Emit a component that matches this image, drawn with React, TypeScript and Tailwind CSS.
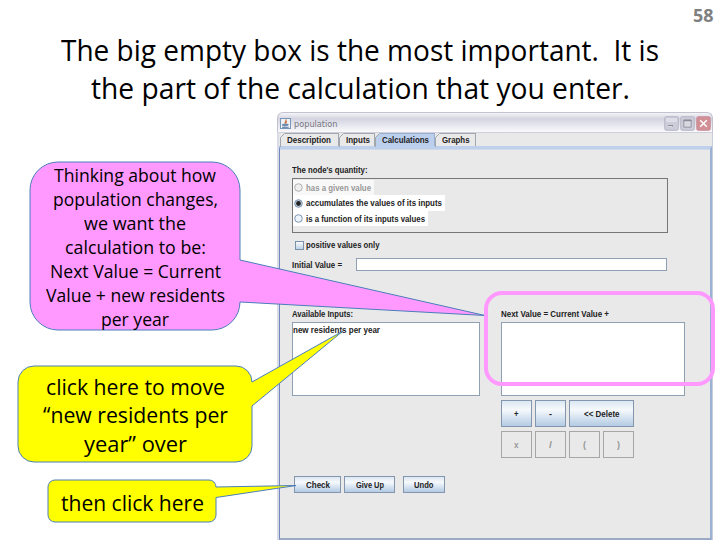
import { useLayoutEffect, useRef, useState } from "react";

// Single line of text condensed or stretched to an exact width.
function Fit({ w, children, className = "" }: { w: number; children: string; className?: string }) {
  const ref = useRef<HTMLSpanElement>(null);
  const [scale, setScale] = useState(1);
  useLayoutEffect(() => {
    const el = ref.current;
    if (el && el.offsetWidth) {
      const range = document.createRange();
      range.selectNodeContents(el);
      const current = el.style.transform;
      el.style.transform = "none";
      setScale(w / range.getBoundingClientRect().width);
      el.style.transform = current;
    }
  }, [w, children]);
  return (
    <span className={"block shrink-0 " + className} style={{ width: w }}>
      <span
        ref={ref}
        className="inline-block origin-left whitespace-pre align-top"
        style={{ transform: `scaleX(${scale})` }}
      >
        {children}
      </span>
    </span>
  );
}

function Tab({ label, w, textW, active = false }: { label: string; w: number; textW: number; active?: boolean }) {
  return (
    <div
      className={
        "relative flex h-full shrink-0 items-center border-t border-r pl-[7px] " +
        (active ? "border-[#9aafd0] bg-[#bcd0ee]" : "border-[#a2a6ad] bg-[#e9e9e9]")
      }
      style={{ width: w }}
    >
      <svg className="absolute -top-px left-0" width="5" height="14" viewBox="0 0 5 14">
        <path d="M0 0H5L0 5Z" fill="#e9e9e9" />
        <path d="M.5 14V4.5L4.5 .5" fill="none" stroke="#a2a6ad" />
      </svg>
      <Fit w={textW}>{label}</Fit>
    </div>
  );
}

function Radio({ checked = false, disabled = false }: { checked?: boolean; disabled?: boolean }) {
  return (
    <svg className="mr-[3px] shrink-0" width="9" height="9" viewBox="0 0 9 9">
      <circle
        cx="4.5"
        cy="4.5"
        r="3.8"
        fill={disabled ? "#eeeeee" : checked ? "#c5d6e6" : "#edf5fc"}
        stroke={disabled ? "#a9a9a9" : "#7189a5"}
        strokeWidth=".9"
      />
      {checked && <circle cx="4.5" cy="4.5" r="2.4" fill="#222" />}
    </svg>
  );
}

function Button({ label, w, textW }: { label: string; w: number; textW: number }) {
  return (
    <div
      className="flex h-full shrink-0 items-center justify-center border border-[#8396ad] bg-linear-to-b from-[#dce7f2] via-[#f6f9fc] via-35% to-[#b3cbe3]"
      style={{ width: w }}
    >
      <Fit w={textW}>{label}</Fit>
    </div>
  );
}

function DisabledKey({ label, textW }: { label: string; textW: number }) {
  return (
    <div className="flex h-full w-[31px] items-center justify-center border border-[#a6a6a6] text-[#999]">
      <Fit w={textW}>{label}</Fit>
    </div>
  );
}

function TitleBar() {
  return (
    <div className="flex h-5 shrink-0 items-center rounded-t-md border border-b-0 border-[#c3c3d0] bg-linear-to-b from-[#f4f4f8] via-[#d4d4e1] via-30% to-[#fafafc] pr-px pl-[2px]">
      <svg width="11" height="11" viewBox="0 0 11 11" className="mt-px">
        <rect x=".5" y=".5" width="10" height="10" fill="#eef2f7" stroke="#7896b8" />
        <path d="M5.8 1.3C7.2 3 3.8 3.6 5.4 5.8M6.8 3C5.6 4 6.4 4.6 6 5.6" fill="none" stroke="#d07a4c" strokeWidth="1.2" />
        <path d="M2.6 6.3h4.8v1.2q-2.4 1.3-4.8 0z" fill="#7d9cc0" stroke="#4f76a3" strokeWidth=".7" />
        <path d="M7.4 6.3q1.7-.1.2 1.3M2 9.2q3.3.8 6.8 0" fill="none" stroke="#4f76a3" strokeWidth=".9" />
      </svg>
      <Fit w={43.5} className="mt-[3px] ml-[2.5px] font-['DejaVu_Sans',sans-serif] text-[8.8px] leading-[12px] font-normal text-[#77777f]">
        population
      </Fit>
      <div className="mt-px ml-auto flex gap-px">
        <svg width="15" height="15" viewBox="0 0 15 15">
          <rect x=".75" y=".75" width="13.5" height="13.5" rx="1.5" fill="#cdcdda" stroke="#b4b4c4" />
          <path d="M2 2h11v4H2z" fill="#dedee8" />
          <path d="M4 10h5" stroke="#8c8c9c" strokeWidth="2" />
          <path d="M4 10.5h4.5" stroke="#fff" strokeWidth=".7" />
        </svg>
        <svg width="15" height="15" viewBox="0 0 15 15">
          <rect x=".75" y=".75" width="13.5" height="13.5" rx="1.5" fill="#cdcdda" stroke="#b4b4c4" />
          <path d="M3.8 4h7.4v7.2H3.8z" fill="#d8d8e0" stroke="#9696a4" />
          <path d="M3.5 4.5h8" stroke="#8b8b9a" strokeWidth="1.4" />
        </svg>
        <svg width="15" height="15" viewBox="0 0 15 15">
          <rect x=".75" y=".75" width="13.5" height="13.5" rx="1.5" fill="#d28f96" stroke="#c98f98" />
          <path d="M4.2 4.2l6.6 6.6M10.8 4.2l-6.6 6.6" stroke="#fff" strokeWidth="1.5" />
        </svg>
      </div>
    </div>
  );
}

function AppWindow() {
  return (
    <section className="absolute top-[112px] left-[277px] flex h-[428px] w-[436px] flex-col font-['Liberation_Sans',Arial,sans-serif] text-[8.6px] leading-[10px] font-bold text-[#222]">
      <TitleBar />
      <div className="flex min-h-0 grow flex-col border-r border-l-2 border-r-[#c9ccda] border-l-[#d9dbe9] bg-[#e9e9e9]">
        <div className="flex h-[14px] shrink-0 border-t border-[#cfd0dc] pl-px">
          <Tab label="Description" w={59} textW={44} />
          <Tab label="Inputs" w={36} textW={24} />
          <Tab label="Calculations" w={60} textW={47} active />
          <Tab label="Graphs" w={41} textW={27.5} />
        </div>
        <div className="flex grow flex-col border-t-[3px] border-r-2 border-b-2 border-l border-t-[#bed0ec] border-r-[#9bb2d4] border-b-[#9aaac5] border-l-[#7187bd] pt-4 pl-3 shadow-[inset_0_1px_0_#cfdaea]">
          <Fit w={75.5}>The node's quantity:</Fit>
          <div className="mt-[3px] h-[55px] w-[376px] border-[1.5px] border-[#777] pt-px">
            <div className="flex h-[15px] w-[81px] items-center bg-[#f8f8f8] pl-px text-[#999]">
              <Radio disabled />
              <Fit w={65}>has a given value</Fit>
            </div>
            <div className="flex h-4 w-[152px] items-center bg-white pl-px">
              <Radio checked />
              <Fit w={136}>accumulates the values of its inputs</Fit>
            </div>
            <div className="flex h-[15px] w-[135px] items-center bg-white pl-px">
              <Radio />
              <Fit w={119}>is a function of its inputs values</Fit>
            </div>
          </div>
          <div className="mt-[7px] ml-[3px] flex h-[10px] items-center">
            <span className="mr-[2px] h-[9px] w-[9px] border border-[#7c91aa] bg-linear-to-b from-[#f7fafc] to-[#bfd2e4]" />
            <Fit w={73.5}>positive values only</Fit>
          </div>
          <div className="mt-2 flex h-[13px] items-center">
            <Fit w={50}>Initial Value =</Fit>
            <div className="ml-[14px] h-[13px] w-[311px] border border-[#8fa0b5] bg-white" />
          </div>
          <div className="mt-[38px] flex">
            <div className="w-[209px]">
              <Fit w={61}>Available Inputs:</Fit>
              <div className="mt-[3px] h-[74px] w-[188px] border border-[#8fa0b3] bg-white pt-[2px]">
                <Fit w={87}>new residents per year</Fit>
              </div>
            </div>
            <div>
              <Fit w={108}>Next Value = Current Value +</Fit>
              <div className="mt-[3px] h-[74px] w-[184px] border border-[#8fa0b3] bg-white" />
              <div className="mt-1 flex h-[27px] gap-[3px]">
                <Button label="+" w={31} textW={4.5} />
                <Button label="-" w={31} textW={3} />
                <Button label="<< Delete" w={65} textW={35.5} />
              </div>
              <div className="mt-1 flex h-[27px] gap-[3px]">
                <DisabledKey label="x" textW={4.5} />
                <DisabledKey label="/" textW={3} />
                <DisabledKey label="(" textW={3} />
                <DisabledKey label=")" textW={3} />
              </div>
            </div>
          </div>
          <div className="mt-[18px] ml-[2px] flex h-[17px]">
            <Button label="Check" w={47} textW={24} />
            <div className="w-[3px]" />
            <Button label="Give Up" w={51} textW={28} />
            <div className="w-2" />
            <Button label="Undo" w={42} textW={19.5} />
          </div>
        </div>
      </div>
    </section>
  );
}

function CalloutShapes() {
  return (
    <svg className="absolute inset-0" width="720" height="540" viewBox="0 0 720 540" stroke="#4a7ebb" strokeWidth="1">
      <path
        fill="#ff99ff"
        d="M58 162H212A28 28 0 0 1 240 190V260L485 315.5L240 302A28 28 0 0 1 212 330H58A28 28 0 0 1 30 302V190A28 28 0 0 1 58 162Z"
      />
      <path
        fill="#ffff00"
        d="M34 366H236A16 16 0 0 1 252 382L343 331L252 406V446A16 16 0 0 1 236 462H34A16 16 0 0 1 18 446V382A16 16 0 0 1 34 366Z"
      />
      <path
        fill="#ffff00"
        d="M55 480H209A7 7 0 0 1 216 487L296 485.5L216 497.5V515A7 7 0 0 1 209 522H55A7 7 0 0 1 48 515V487A7 7 0 0 1 55 480Z"
      />
    </svg>
  );
}

export default function App() {
  return (
    <main className="relative h-[540px] w-[720px] overflow-hidden bg-white font-['Open_Sans',sans-serif] text-black">
      <header className="flex flex-col items-center pt-[31px] text-[28.5px] leading-[38px]">
        <Fit w={598}>The big empty box is the most important.  It is</Fit>
        <Fit w={539}>the part of the calculation that you enter.</Fit>
      </header>
      <div className="absolute top-[6px] right-[7px] text-[17px] leading-5 font-bold text-[#808080]">
        <Fit w={20.5}>58</Fit>
      </div>
      <AppWindow />
      <CalloutShapes />
      <div className="absolute top-[163px] left-[30px] flex w-[210px] flex-col items-center text-[18px] leading-6">
        <Fit w={162}>Thinking about how</Fit>
        <Fit w={165}>population changes,</Fit>
        <Fit w={102}>we want the</Fit>
        <Fit w={141}>calculation to be:</Fit>
        <Fit w={171}>Next Value = Current</Fit>
        <Fit w={179}>Value + new residents</Fit>
        <Fit w={68}>per year</Fit>
      </div>
      <div className="absolute top-[373px] left-[18px] flex w-[234px] flex-col items-center text-[21.5px] leading-[28.3px]">
        <Fit w={179}>click here to move</Fit>
        <Fit w={185}>“new residents per</Fit>
        <Fit w={103}>year” over</Fit>
      </div>
      <div className="absolute top-[489px] left-[48px] flex w-[168px] justify-center text-[21.5px] leading-7">
        <Fit w={143}>then click here</Fit>
      </div>
      <div className="absolute top-[291px] left-[484px] h-[95px] w-[231px] rounded-[18px] border-4 border-[#ff99ff]" />
    </main>
  );
}
